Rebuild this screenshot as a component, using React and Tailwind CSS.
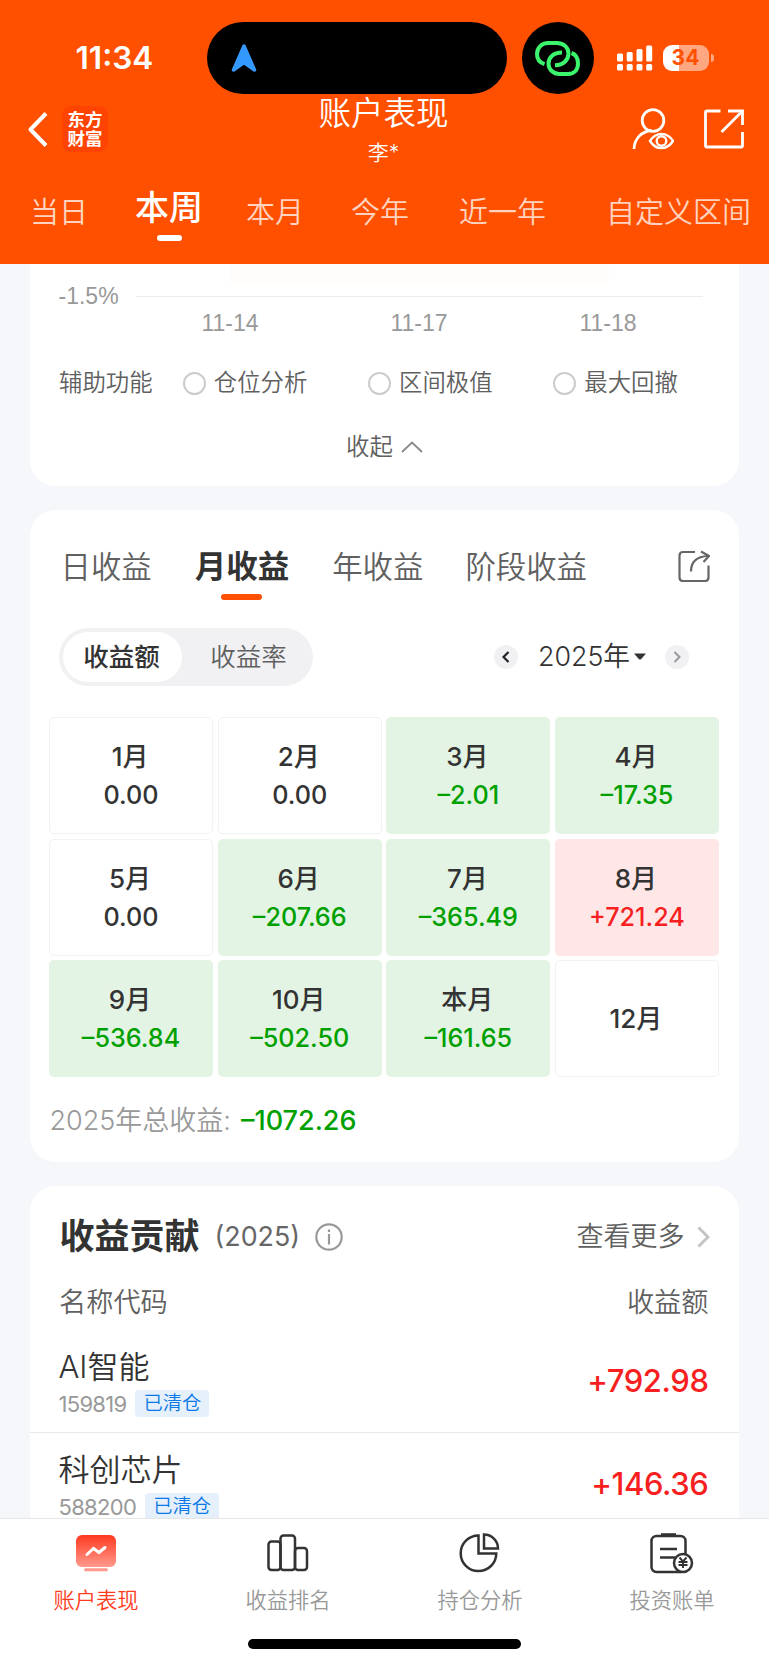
import React from 'react';

const periods = [
  { label: '当日', className: 'ml-[30px]' },
  { label: '本周', className: 'ml-[47px]', active: true },
  { label: '本月', className: 'ml-[43px]' },
  { label: '今年', className: 'ml-[47px]' },
  { label: '近一年', className: 'ml-[50px]' },
  { label: '自定义区间', className: 'ml-[60px]' }
];

const helpers = ['仓位分析', '区间极值', '最大回撤'];

const months = [
  { name: '1月', value: '0.00' },
  { name: '2月', value: '0.00' },
  { name: '3月', value: '–2.01' },
  { name: '4月', value: '–17.35' },
  { name: '5月', value: '0.00' },
  { name: '6月', value: '–207.66' },
  { name: '7月', value: '–365.49' },
  { name: '8月', value: '+721.24' },
  { name: '9月', value: '–536.84' },
  { name: '10月', value: '–502.50' },
  { name: '本月', value: '–161.65' },
  { name: '12月' }
];

const holdings = [
  { name: 'AI智能', code: '159819', amount: '+792.98' },
  { name: '科创芯片', code: '588200', amount: '+146.36' }
];

const StatusBar = () => (
  <div className="flex items-center h-[72px] text-white">
    <div className="w-[207px] pl-[75.500px] text-[31.500px] font-semibold leading-none">11:34</div>
    <div className="w-[300px] h-[72px] rounded-full bg-black flex items-center pl-[24px]">
      <svg width="26" height="28" viewBox="0 0 26 28">
        <path d="M13 2 L23.500 26 L13 18.500 L2.500 26 Z" fill="#3399ff" stroke="#3399ff" strokeWidth="3.500" strokeLinejoin="round" />
      </svg>
    </div>
    <div className="ml-[15px] w-[72px] h-[72px] rounded-full bg-black flex items-center justify-center">
      <svg className="mr-[2px]" width="46" height="36" viewBox="0 0 46 36" fill="none" stroke="#3bf66d" strokeWidth="4">
        <path d="M10.500 24.200 C5.500 22.500 3 18.500 3 14 C3 7.500 8 3 14 3 H23 C30 3 34.500 8 34.500 13.500 C34.500 20 29.500 25 21 25.200" />
        <path d="M28 12.500 C19.500 12.500 14.500 17.500 14.500 23.500 C14.500 29.500 19.500 34 25.500 34 H34 C40.500 34 44 29.500 44 23.500 C44 18.500 42 14.500 37.500 13" />
      </svg>
    </div>
    <svg className="ml-[22.500px]" width="36" height="26" viewBox="0 0 36 26" fill="#fff">
      <rect x="0" y="8.500" width="6" height="8" rx="1.500" />
      <rect x="9.700" y="7" width="6" height="9.500" rx="1.500" />
      <rect x="19.500" y="4" width="6" height="12.500" rx="1.500" />
      <rect x="29.200" y="0.500" width="6" height="16" rx="1.500" />
      <rect x="0" y="19" width="6" height="6.500" rx="1.500" />
      <rect x="9.700" y="19" width="6" height="6.500" rx="1.500" />
      <rect x="19.500" y="19" width="6" height="6.500" rx="1.500" />
      <rect x="29.200" y="19" width="6" height="6.500" rx="1.500" />
    </svg>
    <div className="ml-[10px] w-[46px] h-[26px] rounded-[9px] overflow-hidden bg-linear-to-r from-white from-35% to-[#ffa780] to-35% flex items-center justify-center pb-[1px] text-[21px] font-bold leading-none text-[#ff5000]">
      34
    </div>
    <div className="ml-[2px] w-[3px] h-[8px] rounded-r-full bg-[#ffa780]" />
  </div>
);

const Header = () => (
  <header className="h-[264px] shrink-0 bg-[#ff5000] pt-[22px]">
    <StatusBar />
    <div className="grid grid-cols-3 h-[78px] text-white">
      <div className="flex items-center h-[70px] pl-[27px]">
        <svg width="22" height="36" viewBox="0 0 22 36" fill="none" stroke="#fff" strokeWidth="4" strokeLinejoin="round">
          <path d="M19 2.500 L3.500 18.500 L19 34.500" />
        </svg>
        <div className="ml-[13px] w-[46px] h-[46px] rounded-[9px] bg-[#ff4300] flex flex-col items-center justify-center text-[17.500px] leading-[19px] font-bold">
          <span>东方</span>
          <span>财富</span>
        </div>
      </div>
      <div className="flex flex-col items-center pr-[2px]">
        <div className="h-[38px] pt-[3px] flex items-center text-[32.500px] leading-none whitespace-nowrap">账户表现</div>
        <div className="h-[40px] flex items-center text-[21px] leading-none">李*</div>
      </div>
      <div className="flex items-center justify-end h-[70px] pr-[25px]">
        <svg width="42" height="42" viewBox="0 0 42 42" fill="none" stroke="#fff" strokeWidth="2.800">
          <circle cx="21" cy="12.500" r="10.800" />
          <path d="M2 41 C2.500 31 9 23.500 19.500 22.500" />
          <path d="M18 33 C24 23.500 35 23.500 41 33 C35 42.500 24 42.500 18 33 Z" strokeWidth="2.400" />
          <circle cx="29.500" cy="33" r="4.800" strokeWidth="2.400" />
        </svg>
        <svg className="ml-[30px]" width="40" height="40" viewBox="0 0 40 40" fill="none" stroke="#fff" strokeWidth="2.800">
          <path d="M16.500 2 H3 Q1.500 2 1.500 3.500 V36.500 Q1.500 38 3 38 H37 Q38.500 38 38.500 36.500 V23" />
          <path d="M24 2 H38.500 V16" />
          <path d="M38 2.500 L17.500 23" />
        </svg>
      </div>
    </div>
    <div className="flex items-start whitespace-nowrap">
      {periods.map(({ label, className, active }) =>
        active ? (
          <div key={label} className={`${className} flex flex-col items-center text-white`}>
            <div className="h-[63px] pt-[8px] flex items-center text-[34px] font-medium leading-none">{label}</div>
            <div className="w-[25px] h-[6px] rounded-full bg-white" />
          </div>
        ) : (
          <div key={label} className={`${className} h-[80px] flex items-center text-[29px] leading-none text-[#ffd3bf]`}>
            {label}
          </div>
        )
      )}
    </div>
  </header>
);

const ChartCard = () => (
  <section className="h-[222px] shrink-0 rounded-b-[26px] bg-white">
    <div className="ml-[200px] w-[379px] h-[21px] bg-[#fffcfc]" />
    <div className="flex items-center h-[22px] pl-[29px] font-['Liberation_Sans',sans-serif] font-normal">
      <span className="w-[77px] text-[23px] leading-none text-[#999]">-1.5%</span>
      <div className="w-[567px] h-px bg-[#ececec]" />
    </div>
    <div className="flex h-[34px] pl-[106px] font-['Liberation_Sans',sans-serif] font-normal text-[23px] leading-[32px] text-[#999]">
      <span className="w-[189px] text-center">11-14</span>
      <span className="w-[189px] text-center">11-17</span>
      <span className="w-[189px] text-center">11-18</span>
    </div>
    <div className="flex items-center h-[84px] pl-[29.500px] text-[23.400px] leading-none text-[#606060] whitespace-nowrap">
      <span className="w-[124px]">辅助功能</span>
      {helpers.map(label => (
        <label key={label} className="w-[185.500px] flex items-center gap-[8px]">
          <span className="w-[23px] h-[23px] rounded-full border-2 border-[#ccc]" />
          {label}
        </label>
      ))}
    </div>
    <div className="flex items-center justify-center h-[44px] pl-[1px] gap-[8px] text-[23.400px] leading-none text-[#606060]">
      收起
      <svg width="22" height="12" viewBox="0 0 22 12" fill="none" stroke="#888" strokeWidth="1.800">
        <path d="M1 11 L11 1.500 L21 11" />
      </svg>
    </div>
  </section>
);

const MonthCell = ({ name, value }) => {
  let tone = 'bg-white border border-[#f2f2f3]';
  let color = 'text-[#333]';
  if (value && value.startsWith('–')) {
    tone = 'bg-[#e4f4e4]';
    color = 'text-[#00a000]';
  } else if (value && value.startsWith('+')) {
    tone = 'bg-[#ffe7e7]';
    color = 'text-[#f71f1f]';
  }

  return (
    <div className={`${tone} rounded-[5px] flex flex-col items-center justify-center pt-[1px] font-medium`}>
      <div className="h-[38px] pr-[2px] flex items-center text-[26px] leading-none text-[#333]">{name}</div>
      {value && <div className={`${color} h-[38px] pt-[2px] flex items-center text-[25.200px] leading-none`}>{value}</div>}
    </div>
  );
};

const IncomeCard = () => (
  <section className="mt-[24px] h-[652px] shrink-0 rounded-[26px] bg-white">
    <div className="flex items-start h-[117px] pl-[31px] pt-[36px] pr-[29px] text-[30.400px] text-[#606060] whitespace-nowrap">
      <div className="h-[42px] flex items-center leading-none">日收益</div>
      <div className="ml-[43px] flex flex-col items-center text-[31.500px] font-bold text-[#333]">
        <div className="h-[42px] flex items-center leading-none">月收益</div>
        <div className="mt-[6px] w-[41px] h-[6px] rounded-full bg-[#ff5000]" />
      </div>
      <div className="ml-[43px] h-[42px] flex items-center leading-none">年收益</div>
      <div className="ml-[42px] h-[42px] flex items-center leading-none">阶段收益</div>
      <svg className="ml-auto mt-[4px]" width="32" height="32" viewBox="0 0 32 32" fill="none" stroke="#666" strokeWidth="2.200">
        <path d="M17 2 H5 Q1.500 2 1.500 5.500 V27.500 Q1.500 31 5 31 H27 Q30.500 31 30.500 27.500 V15.500" />
        <path d="M13 21.500 C13 12 18 6.500 30 6" />
        <path d="M23 1.500 L31 6 L25.500 12" />
      </svg>
    </div>
    <div className="flex items-center h-[59px] pl-[29px] text-[25.500px] leading-none">
      <div className="w-[254px] h-[58px] rounded-full bg-[#f1f1f4] p-[4px] flex items-center">
        <div className="w-[119px] h-[50px] rounded-full bg-white flex items-center justify-center pr-[1px] font-medium text-[#333]">收益额</div>
        <div className="w-[127px] flex items-center justify-center pl-[7px] text-[#606060]">收益率</div>
      </div>
      <div className="ml-[181.500px] w-[24px] h-[24px] rounded-full bg-[#f1f1f4] flex items-center justify-center">
        <svg width="8" height="12" viewBox="0 0 8 12" fill="none" stroke="#222" strokeWidth="2.200">
          <path d="M6.500 1 L1.500 6 L6.500 11" />
        </svg>
      </div>
      <div className="ml-[20px] flex items-center gap-[4px] text-[26.800px] text-[#333]">
        2025年
        <svg width="12" height="7" viewBox="0 0 12 7">
          <path d="M0 0.500 H12 L7 6.200 Q6 7 5 6.200 Z" fill="#333" />
        </svg>
      </div>
      <div className="ml-[19px] w-[24px] h-[24px] rounded-full bg-[#f1f1f4] flex items-center justify-center">
        <svg width="8" height="12" viewBox="0 0 8 12" fill="none" stroke="#999" strokeWidth="2">
          <path d="M1.500 1 L6.500 6 L1.500 11" />
        </svg>
      </div>
    </div>
    <div className="grid grid-cols-4 grid-rows-3 gap-[4.500px] mt-[31px] ml-[19.500px] w-[670px] h-[360px]">
      {months.map(month => (
        <MonthCell key={month.name} {...month} />
      ))}
    </div>
    <div className="flex items-center h-[86px] pl-[20px] gap-[10px] text-[27px] leading-none">
      <span className="text-[#999]">2025年总收益:</span>
      <span className="font-medium text-[#00a000]">–1072.26</span>
    </div>
  </section>
);

const ContributionCard = () => (
  <section className="mt-[24px] h-[360px] shrink-0 rounded-t-[26px] bg-white leading-none">
    <div className="flex items-center h-[101px] px-[29px]">
      <h2 className="pl-[1px] text-[35px] font-bold text-[#333]">收益贡献</h2>
      <span className="ml-[15px] text-[26.800px] font-normal text-[#666]">(2025)</span>
      <svg className="ml-[15px]" width="28" height="28" viewBox="0 0 28 28" fill="none" stroke="#999" strokeWidth="2.200">
        <circle cx="14" cy="14" r="12.700" />
        <path d="M14 11 V21.500 M14 6.500 V9" />
      </svg>
      <span className="ml-auto text-[27px] text-[#606060]">查看更多</span>
      <svg className="ml-[12px]" width="13" height="22" viewBox="0 0 13 22" fill="none" stroke="#c4c4c4" strokeWidth="3">
        <path d="M1.500 1.500 L11 11 L1.500 20.500" />
      </svg>
    </div>
    <div className="flex items-center justify-between h-[30px] pl-[29.500px] pr-[30px] pt-[2px] text-[27.200px] text-[#606060]">
      <span>名称代码</span>
      <span>收益额</span>
    </div>
    <div className="pt-[13px]">
      {holdings.map(({ name, code, amount }) => (
        <div key={code} className="flex items-center justify-between h-[103px] pl-[29px] pr-[30px] border-b border-[#e9e9ec]">
          <div className="flex flex-col pt-[3px]">
            <div className="h-[42px] pt-[1px] flex items-center text-[31px] text-[#333]">{name}</div>
            <div className="flex items-center h-[34px] gap-[9px] text-[#999]">
              <span className="text-[22px] tracking-[-0.700px] font-normal">{code}</span>
              <span className="w-[74px] h-[27px] rounded-[4px] bg-[#e5f0fb] flex items-center justify-center text-[19.300px] text-[#0a78e8]">已清仓</span>
            </div>
          </div>
          <span className="pb-[2px] text-[31px] tracking-[-0.400px] font-medium text-[#f71f1f]">{amount}</span>
        </div>
      ))}
    </div>
  </section>
);

const NavItem = ({ label, active, children }) => (
  <div className="w-[192px] flex flex-col items-center">
    <svg width="44" height="44" viewBox="0 0 44 44" fill="none" stroke="#333" strokeWidth="2.500">
      {children}
    </svg>
    <span className={`${active ? 'text-[#ff3b20]' : 'text-[#999]'} mt-[15px] text-[21.300px] leading-none`}>{label}</span>
  </div>
);

const BottomNav = () => (
  <nav className="h-[147px] shrink-0 border-t border-[#e5e5e5] bg-white pt-[12px] flex flex-col items-center">
    <div className="flex w-full h-[108px]">
      <NavItem label="账户表现" active>
        <defs>
          <linearGradient id="screen" x1="0" y1="0" x2="0" y2="1">
            <stop offset="0" stopColor="#ff3a20" />
            <stop offset="1" stopColor="#ff9a8c" />
          </linearGradient>
        </defs>
        <rect x="2" y="4" width="40" height="32" rx="6" fill="url(#screen)" stroke="none" />
        <path d="M13 23.500 L19.500 17.500 L25 21.500 L31 16.500" stroke="#fff" strokeWidth="3" strokeLinecap="round" />
        <path d="M11.500 38.700 H32.500" stroke="#ff9a8c" strokeWidth="3" strokeLinecap="round" />
      </NavItem>
      <NavItem label="收益排名">
        <rect x="2.500" y="10.500" width="12" height="28.500" rx="3" />
        <rect x="14.500" y="4.500" width="14.500" height="34.500" rx="3" />
        <rect x="29" y="17" width="12" height="22" rx="3" />
      </NavItem>
      <NavItem label="持仓分析">
        <path d="M20.500 4.500 A17.800 17.800 0 1 0 38.300 22.500 H20.500 Z" />
        <path d="M26 3.500 V17.500 H40 A14 14 0 0 0 26 3.500 Z" />
      </NavItem>
      <NavItem label="投资账单">
        <rect x="1.500" y="5" width="34" height="36" rx="5" />
        <path d="M11 3.700 H26" strokeWidth="3" />
        <path d="M10 18 H27 M10 26.500 H25" />
        <circle cx="33" cy="32" r="9" fill="#fff" />
        <path d="M29.500 26.500 L33 30.500 L36.500 26.500 M33 30.500 V37 M28.500 31 H37.500 M28.500 34 H37.500" strokeWidth="1.900" />
      </NavItem>
    </div>
    <div className="w-[273px] h-[10px] rounded-full bg-black" />
  </nav>
);

export default function App() {
  return (
    <div className="w-[769px] h-[1665px] overflow-hidden flex flex-col bg-[#f6f7fa] font-['Inter','Noto_Sans_CJK_SC',sans-serif] font-[350]">
      <Header />
      <main className="flex-1 min-h-0 overflow-hidden flex flex-col pl-[29.500px] pr-[30.500px]">
        <ChartCard />
        <IncomeCard />
        <ContributionCard />
      </main>
      <BottomNav />
    </div>
  );
}
